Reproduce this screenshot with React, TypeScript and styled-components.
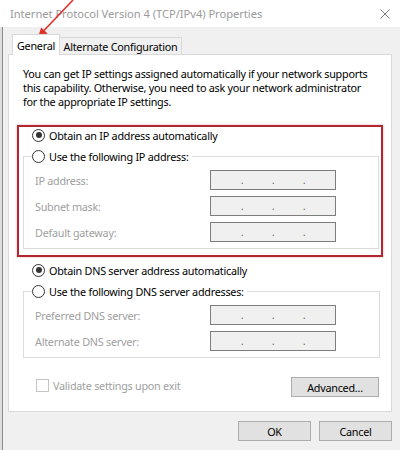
import React from 'react'
import styled, { createGlobalStyle } from 'styled-components'

const GlobalStyle = createGlobalStyle`
  html, body {
    margin: 0;
    padding: 0;
    background: #f0f0f0;
  }
  body {
    font-family: 'Noto Sans', 'Open Sans', Arial, sans-serif;
    font-size: 10.8px;
    letter-spacing: -0.25px;
    color: #000;
  }
`

const Window = styled.div`
  position: relative;
  width: 400px;
  height: 450px;
  display: flex;
  flex-direction: column;
  background: #f0f0f0;
  overflow: hidden;
`

const TitleBar = styled.div`
  flex: none;
  height: 27px;
  display: flex;
  align-items: center;
  justify-content: space-between;
  padding: 0 10px;
  background: #fff;
  color: #9a9a9a;
  font-size: 11.2px;
  letter-spacing: -0.05px;
`

const Body = styled.div`
  flex: 1;
  display: flex;
  flex-direction: column;
  box-shadow: inset 2px 0 0 #dedede, inset 3px 0 0 #8a8a8a;
`

const TabStrip = styled.div`
  display: flex;
  align-items: flex-end;
  height: 20px;
  margin-top: 7px;
  padding-left: 12px;
`

const Tab = styled.div<{ $active?: boolean; $w: number }>`
  position: relative;
  z-index: 1;
  box-sizing: border-box;
  width: ${(p) => p.$w}px;
  height: ${(p) => (p.$active ? 21 : 17)}px;
  margin-bottom: ${(p) => (p.$active ? -1 : 0)}px;
  display: flex;
  align-items: center;
  justify-content: center;
  background: ${(p) => (p.$active ? '#fff' : '#f0f0f0')};
  border: 1px solid #d9d9d9;
  border-bottom: 0;
  ${(p) => !p.$active && 'border-left: 0;'}
  white-space: nowrap;
`

const Panel = styled.div`
  box-sizing: border-box;
  height: 358px;
  margin: 0 8px;
  padding: 12px 11px 0 14px;
  display: flex;
  flex-direction: column;
  background: #fff;
  border: 1px solid #d9d9d9;
`

const Description = styled.p`
  margin: 0;
  line-height: 14px;
  white-space: nowrap;
`

const Highlight = styled.div`
  margin: 16px -3px 0 -6px;
  padding: 0 2px 6px 4px;
  border: 2px solid #b3262f;
  box-shadow: 0 0 2px rgba(210, 70, 80, 0.45);
`

const Choice = styled.div<{ $top?: number }>`
  display: flex;
  align-items: center;
  gap: 4px;
  height: 16px;
  margin-top: ${(p) => p.$top ?? 0}px;
  padding-left: 9px;
  white-space: nowrap;
`

const Radio = styled.span<{ $checked?: boolean }>`
  position: relative;
  box-sizing: border-box;
  width: 13px;
  height: 13px;
  border: 1px solid #333;
  border-radius: 50%;
  background: #fff;
  flex: none;

  &::after {
    content: '';
    display: ${(p) => (p.$checked ? 'block' : 'none')};
    position: absolute;
    left: 2.5px;
    top: 2.5px;
    width: 6px;
    height: 6px;
    border-radius: 50%;
    background: #333;
  }
`

const Group = styled.fieldset`
  min-width: 0;
  margin: 5px 0 0;
  padding: 6px 0 6px 8px;
  border: 1px solid #dcdcdc;
`

const Legend = styled.legend`
  display: flex;
  align-items: center;
  gap: 4px;
  height: 16px;
  padding: 0 3px 0 0;
  white-space: nowrap;
`

const FieldGrid = styled.div`
  display: grid;
  grid-template-columns: 175px 126px;
  row-gap: 6px;
  align-items: center;
  padding-left: 3px;
`

const FieldLabel = styled.span`
  color: #a0a0a0;
`

const IpBox = styled.div`
  box-sizing: border-box;
  height: 20px;
  display: grid;
  grid-template-columns: 1fr 4px 1fr 4px 1fr 4px 1fr;
  align-items: center;
  padding: 0 2px;
  background: #f0f0f0;
  border: 1px solid #7d7d7d;
  color: #6d6d6d;
  line-height: 18px;
`

const Dot = styled.span`
  text-align: center;
  font-size: 11px;
`

const Footer = styled.div`
  display: flex;
  justify-content: space-between;
  align-items: flex-start;
  margin: 19px 1px 0 0;
  padding-left: 13px;
`

const CheckLabel = styled.label`
  display: flex;
  align-items: center;
  gap: 4px;
  margin-top: 1px;
  color: #a0a0a0;
`

const CheckBox = styled.span`
  box-sizing: border-box;
  width: 13px;
  height: 13px;
  border: 1px solid #c4c4c4;
  background: #fff;
`

const Button = styled.button<{ $w: number }>`
  box-sizing: border-box;
  width: ${(p) => p.$w}px;
  height: 20px;
  padding: 0;
  font: inherit;
  letter-spacing: inherit;
  color: #000;
  background: #e1e1e1;
  border: 1px solid #adadad;
`

const ButtonRow = styled.div`
  display: flex;
  justify-content: flex-end;
  gap: 8px;
  padding: 9px 8px 0 0;
`

const Annotation = styled.svg`
  position: absolute;
  left: 0;
  top: 0;
  pointer-events: none;
`

const IpField = () => (
  <IpBox>
    <span />
    <Dot>.</Dot>
    <span />
    <Dot>.</Dot>
    <span />
    <Dot>.</Dot>
    <span />
  </IpBox>
)

const Fields: React.FC<{ labels: string[] }> = ({ labels }) => (
  <FieldGrid>
    {labels.map((label) => (
      <React.Fragment key={label}>
        <FieldLabel>{label}</FieldLabel>
        <IpField />
      </React.Fragment>
    ))}
  </FieldGrid>
)

export default function App() {
  return (
    <Window>
      <GlobalStyle />
      <TitleBar>
        <span>Internet Protocol Version 4 (TCP/IPv4) Properties</span>
        <svg width="10" height="10" viewBox="0 0 10 10">
          <path d="M0.5 0.5 L9.5 9.5 M9.5 0.5 L0.5 9.5" stroke="#808080" strokeWidth="1" />
        </svg>
      </TitleBar>
      <Body>
        <TabStrip>
          <Tab $active $w={48}>General</Tab>
          <Tab $w={122}>Alternate Configuration</Tab>
        </TabStrip>
        <Panel>
          <Description>
            You can get IP settings assigned automatically if your network supports
            <br />
            this capability. Otherwise, you need to ask your network administrator
            <br />
            for the appropriate IP settings.
          </Description>

          <Highlight>
            <Choice>
              <Radio $checked />
              Obtain an IP address automatically
            </Choice>
            <Group>
              <Legend>
                <Radio />
                Use the following IP address:
              </Legend>
              <Fields labels={['IP address:', 'Subnet mask:', 'Default gateway:']} />
            </Group>
          </Highlight>

          <Choice $top={5}>
            <Radio $checked />
            Obtain DNS server address automatically
          </Choice>
          <Group>
            <Legend>
              <Radio />
              Use the following DNS server addresses:
            </Legend>
            <Fields labels={['Preferred DNS server:', 'Alternate DNS server:']} />
          </Group>

          <Footer>
            <CheckLabel>
              <CheckBox />
              Validate settings upon exit
            </CheckLabel>
            <Button $w={88}>Advanced...</Button>
          </Footer>
        </Panel>
        <ButtonRow>
          <Button $w={73}>OK</Button>
          <Button $w={73}>Cancel</Button>
        </ButtonRow>
      </Body>
      <Annotation width="100" height="50" viewBox="0 0 100 50">
        <line x1="73" y1="0" x2="44" y2="30.5" stroke="#e0312b" strokeWidth="1.6" />
        <polygon points="38,37 47.5,33.5 41.2,27.4" fill="#e0312b" />
      </Annotation>
    </Window>
  )
}
